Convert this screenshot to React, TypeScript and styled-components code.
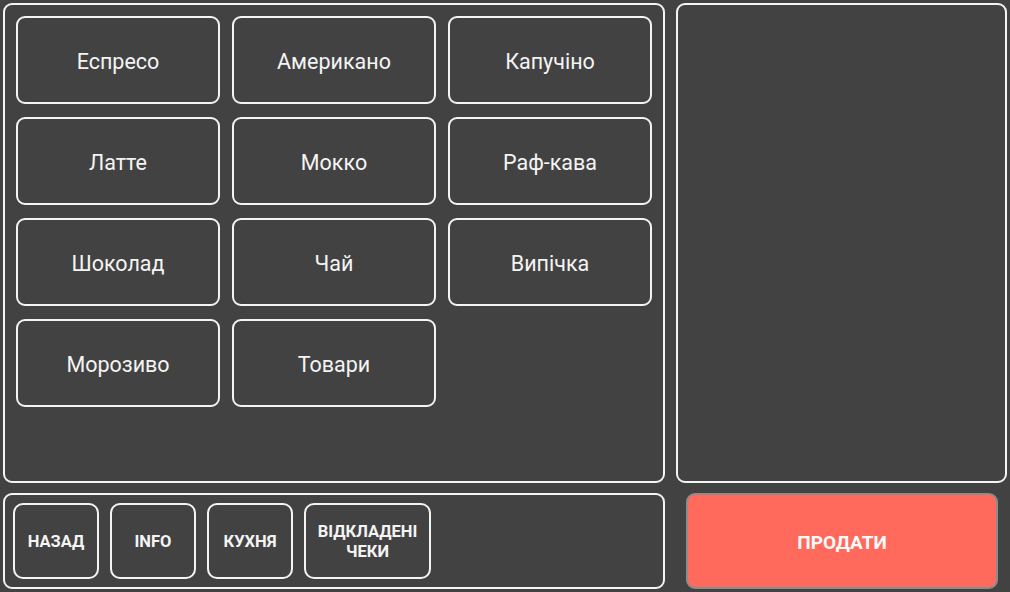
import React from 'react'
import styled, { createGlobalStyle } from 'styled-components'

const GlobalStyle = createGlobalStyle`
  html, body {
    margin: 0;
    padding: 0;
    background: #424242;
  }
  body {
    font-family: Roboto, 'Noto Sans', sans-serif;
  }
`

const Screen = styled.div`
  display: grid;
  grid-template-columns: 662px 331px;
  grid-template-rows: 480px 96px;
  column-gap: 11px;
  row-gap: 10px;
  padding: 3px;
  width: 1010px;
  height: 592px;
  box-sizing: border-box;
  background: #424242;
`

const Panel = styled.div`
  border: 2px solid #f4f4f4;
  border-radius: 9px;
  background: #424242;
  box-sizing: border-box;
`

const MenuPanel = styled(Panel)`
  padding: 11px;
  display: grid;
  grid-template-columns: repeat(3, 204px);
  grid-auto-rows: 88px;
  column-gap: 12px;
  row-gap: 13px;
  align-content: start;
`

const ActionsPanel = styled(Panel)`
  padding: 8px;
  display: flex;
  gap: 11px;
  align-items: stretch;
`

const SellSlot = styled.div`
  padding: 0 9px 0 10px;
  display: flex;
`

const Tile = styled.button`
  border: 2px solid #f4f4f4;
  border-radius: 9px;
  background: #424242;
  color: #f4f4f4;
  font-family: Roboto, sans-serif;
  font-size: 21.5px;
  font-weight: 400;
  display: flex;
  align-items: center;
  justify-content: center;
  padding: 3px 0 0;
  cursor: pointer;
`

const ActionButton = styled.button<{ $w: number }>`
  width: ${(p) => p.$w}px;
  border: 2px solid #f4f4f4;
  border-radius: 10px;
  background: #424242;
  color: #f4f4f4;
  font-family: Roboto, sans-serif;
  font-size: 16.5px;
  font-weight: 700;
  line-height: 20px;
  text-transform: uppercase;
  padding: 2px 2px 0;
  display: flex;
  align-items: center;
  justify-content: center;
  text-align: center;
  cursor: pointer;
`

const SellButton = styled.button`
  flex: 1;
  border: 2px solid #8c8c8c;
  border-radius: 9px;
  background: #ff6a5c;
  color: #fafafa;
  font-family: Roboto, sans-serif;
  font-size: 19px;
  font-weight: 700;
  padding: 2px 0 0;
  cursor: pointer;
`

const items = [
  'Еспресо',
  'Американо',
  'Капучіно',
  'Латте',
  'Мокко',
  'Раф-кава',
  'Шоколад',
  'Чай',
  'Випічка',
  'Морозиво',
  'Товари',
]

const actions: { label: React.ReactNode; w: number }[] = [
  { label: 'Назад', w: 86 },
  { label: 'Info', w: 86 },
  { label: 'Кухня', w: 86 },
  {
    label: (
      <>
        Відкладені
        <br />
        Чеки
      </>
    ),
    w: 127,
  },
]

export default function App() {
  return (
    <>
      <GlobalStyle />
      <Screen>
        <MenuPanel>
          {items.map((name) => (
            <Tile key={name}>{name}</Tile>
          ))}
        </MenuPanel>
        <Panel />
        <ActionsPanel>
          {actions.map((a, i) => (
            <ActionButton key={i} $w={a.w}>
              {a.label}
            </ActionButton>
          ))}
        </ActionsPanel>
        <SellSlot>
          <SellButton>ПРОДАТИ</SellButton>
        </SellSlot>
      </Screen>
    </>
  )
}
